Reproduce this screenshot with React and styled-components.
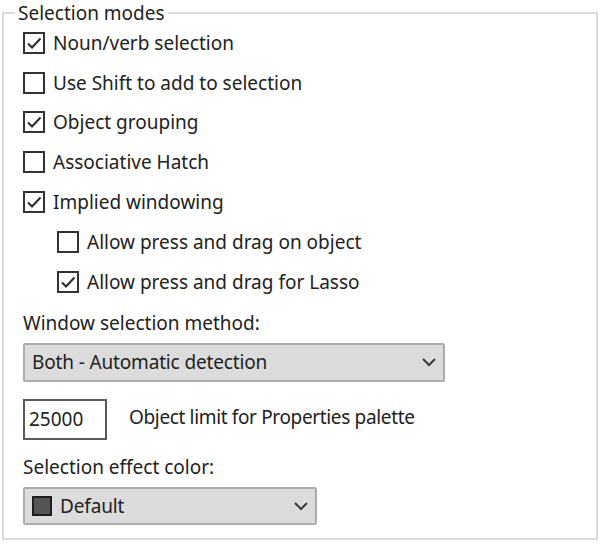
import React from "react";
import styled, { createGlobalStyle } from "styled-components";

const GlobalStyle = createGlobalStyle`
  html, body {
    margin: 0;
    padding: 0;
    background: #ffffff;
  }
  body {
    font-family: "Noto Sans", "Open Sans", sans-serif;
    font-size: 19px;
    color: #222222;
  }
`;

const Frame = styled.fieldset`
  box-sizing: border-box;
  width: 596px;
  height: 540px;
  margin: 0 2px;
  padding: 0 0 0 19px;
  border: 2px solid #dadada;
  min-width: 0;
`;

const Legend = styled.legend`
  margin-left: -8px;
  padding: 0 3px;
  line-height: 26px;
`;

const Column = styled.div`
  display: flex;
  flex-direction: column;
  align-items: flex-start;
  margin-top: -3px;
`;

const Row = styled.label`
  display: flex;
  align-items: center;
  gap: 8px;
  height: 39.8px;
  padding-left: ${(p) => (p.$indent ? "34px" : "0")};
  white-space: nowrap;
`;

const Box = styled.span`
  box-sizing: border-box;
  width: 22px;
  height: 22px;
  border: 2px solid #333333;
  background: #ffffff;
  display: flex;
  align-items: center;
  justify-content: center;
`;

const Caption = styled.div`
  line-height: 26px;
  margin-top: ${(p) => p.$top || "0"};
  white-space: nowrap;
`;

const Select = styled.div`
  box-sizing: border-box;
  display: flex;
  align-items: center;
  gap: 8px;
  width: ${(p) => p.$width};
  height: ${(p) => p.$height || "39px"};
  margin-top: 7px;
  padding: 0 6px 0 7px;
  background: #dcdcdc;
  border: 2px solid #adadad;
  border-radius: 2px;
  white-space: nowrap;
`;

const SelectText = styled.span`
  flex: 1;
  letter-spacing: -0.15px;
`;

const Swatch = styled.span`
  box-sizing: border-box;
  width: 20px;
  height: 20px;
  background: #555555;
  border: 2px solid #1e1e1e;
`;

const LimitRow = styled.div`
  display: flex;
  align-items: center;
  gap: 22px;
  margin-top: 17px;
  white-space: nowrap;
`;

const LimitLabel = styled.span`
  letter-spacing: -0.35px;
  margin-bottom: 4px;
`;

const NumberBox = styled.div`
  box-sizing: border-box;
  width: 84px;
  height: 41px;
  padding-left: 4px;
  display: flex;
  align-items: center;
  border: 2px solid #5a5a5a;
  background: #ffffff;
`;

const Check = () => (
  <svg width="16" height="14" viewBox="0 0 16 14">
    <path d="M2 7.5 L6 11.5 L14.5 2.5" fill="none" stroke="#2a2a2a" strokeWidth="2" />
  </svg>
);

const Chevron = () => (
  <svg width="16" height="10" viewBox="0 0 16 10">
    <path d="M2 2 L8 8 L14 2" fill="none" stroke="#3a3a3a" strokeWidth="2" />
  </svg>
);

const Option = ({ checked, indent, children }) => (
  <Row $indent={indent}>
    <Box>{checked && <Check />}</Box>
    {children}
  </Row>
);

const options = [
  { label: "Noun/verb selection", checked: true },
  { label: "Use Shift to add to selection", checked: false },
  { label: "Object grouping", checked: true },
  { label: "Associative Hatch", checked: false },
  { label: "Implied windowing", checked: true },
  { label: "Allow press and drag on object", checked: false, indent: true },
  { label: "Allow press and drag for Lasso", checked: true, indent: true },
];

export default function App() {
  return (
    <>
      <GlobalStyle />
      <Frame>
        <Legend>Selection modes</Legend>
        <Column>
          {options.map((o) => (
            <Option key={o.label} checked={o.checked} indent={o.indent}>
              {o.label}
            </Option>
          ))}
          <Caption $top="8px">Window selection method:</Caption>
          <Select $width="422px">
            <SelectText>Both - Automatic detection</SelectText>
            <Chevron />
          </Select>
          <LimitRow>
            <NumberBox>25000</NumberBox>
            <LimitLabel>Object limit for Properties palette</LimitLabel>
          </LimitRow>
          <Caption $top="14px">Selection effect color:</Caption>
          <Select $width="294px" $height="38px">
            <Swatch />
            <SelectText>Default</SelectText>
            <Chevron />
          </Select>
        </Column>
      </Frame>
    </>
  );
}
